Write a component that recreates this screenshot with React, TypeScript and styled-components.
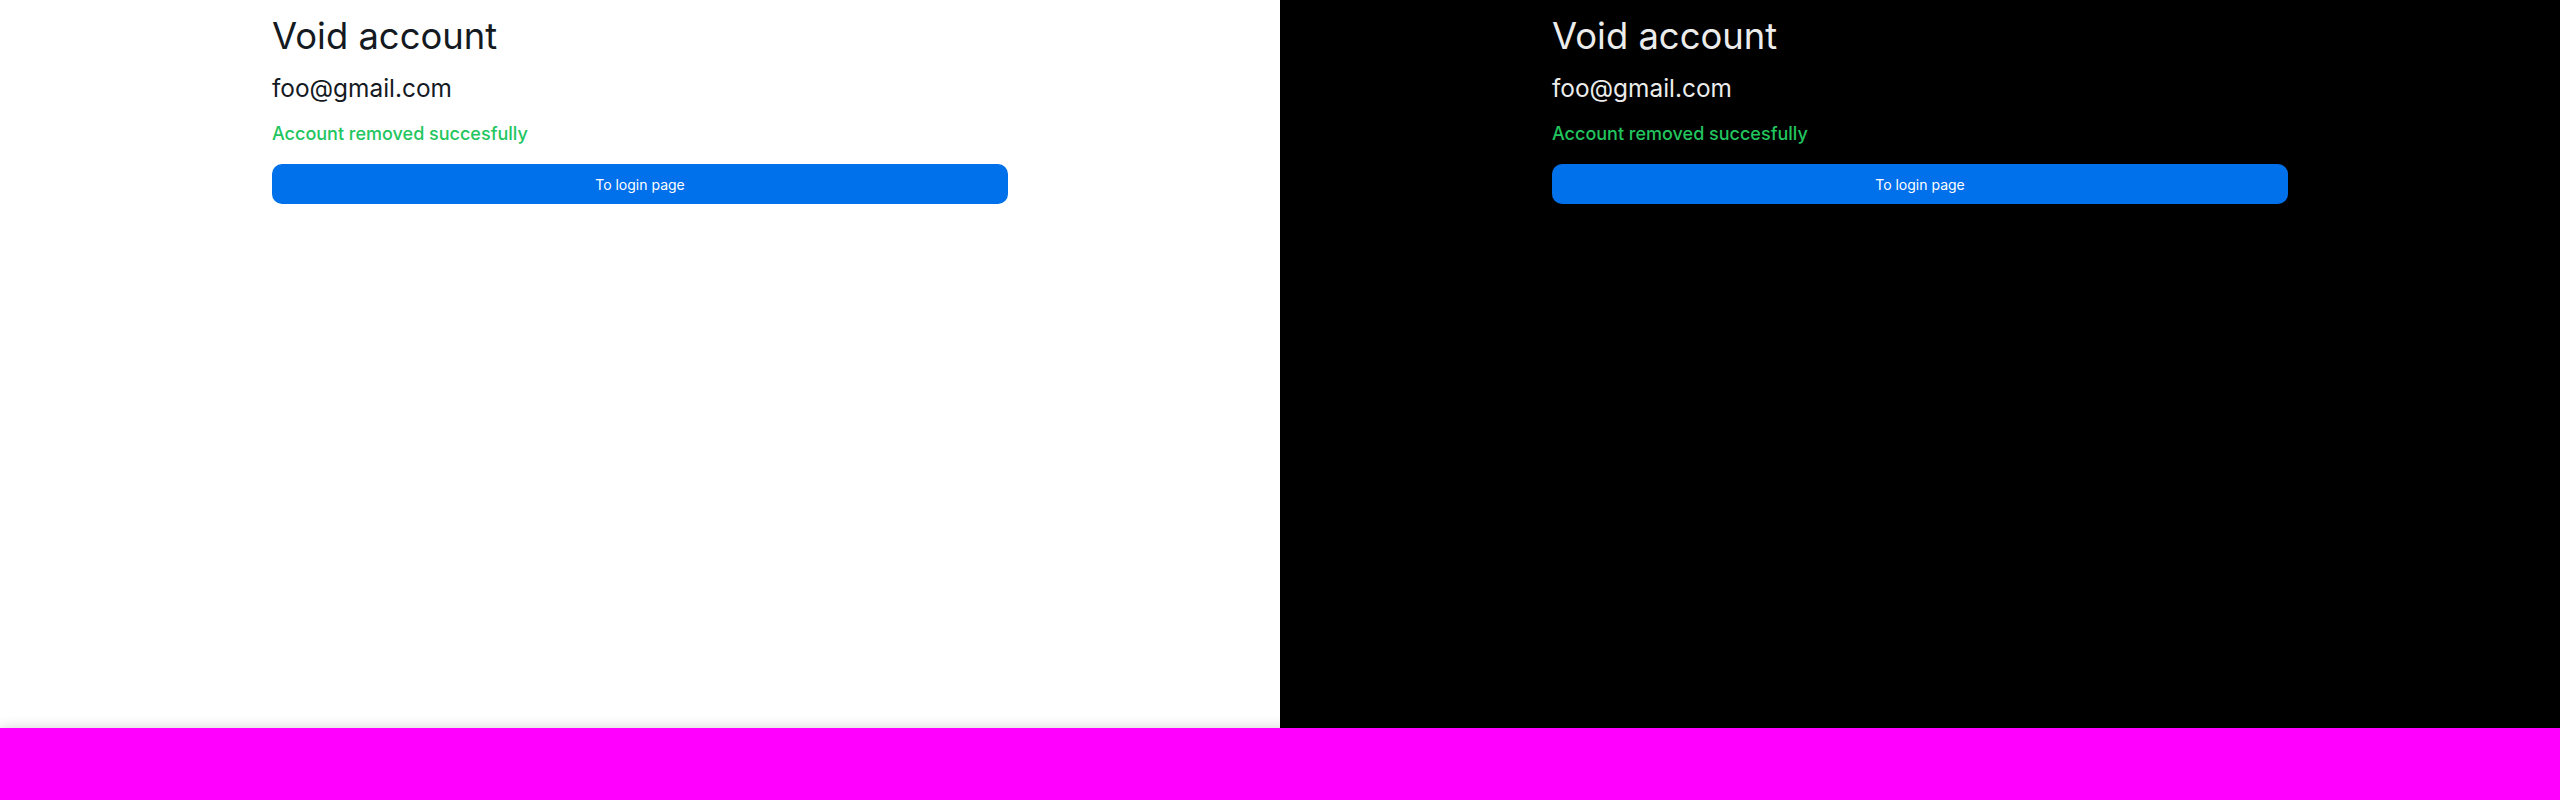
import React from "react";
import styled, { createGlobalStyle } from "styled-components";

const Global = createGlobalStyle`
  html, body { margin: 0; padding: 0; }
  body { background: #ff00ff; font-family: Inter, "Noto Sans", sans-serif; }
`;

const Page = styled.div`
  display: flex;
  flex-direction: column;
  width: 2560px;
  height: 800px;
`;

const Panels = styled.div`
  display: grid;
  grid-template-columns: 1fr 1fr;
  height: 728px;
`;

const Panel = styled.section<{ $dark?: boolean }>`
  display: flex;
  justify-content: center;
  background: ${(p) => (p.$dark ? "#000000" : "#ffffff")};
  color: ${(p) => (p.$dark ? "#ececec" : "#141a1f")};
`;

const Column = styled.div`
  width: 736px;
  display: flex;
  flex-direction: column;
  padding-top: 14px;
`;

const Title = styled.h1`
  margin: 0;
  font-size: 36.4px;
  font-weight: 400;
  line-height: 44px;
`;

const Email = styled.h2`
  margin: 16px 0 0;
  font-size: 24.4px;
  font-weight: 400;
  line-height: 29px;
`;

const Success = styled.p`
  margin: 19px 0 0;
  font-size: 18px;
  font-weight: 500;
  line-height: 24px;
  color: #22c55e;
`;

const Button = styled.button`
  margin-top: 18px;
  height: 40px;
  width: 100%;
  border: none;
  border-radius: 10px;
  background: #0070eb;
  color: #ffffff;
  font-family: Inter, "Noto Sans", sans-serif;
  font-size: 14px;
  cursor: pointer;
`;

const Footer = styled.div`
  flex: 1;
  background: #ff00ff;
  box-shadow: 0 0 12px rgba(0, 0, 0, 0.18);
  position: relative;
`;

function Card({ dark }: { dark?: boolean }) {
  return (
    <Panel $dark={dark}>
      <Column>
        <Title>Void account</Title>
        <Email>foo@gmail.com</Email>
        <Success>Account removed succesfully</Success>
        <Button>To login page</Button>
      </Column>
    </Panel>
  );
}

export default function App() {
  return (
    <>
      <Global />
      <Page>
        <Panels>
          <Card />
          <Card dark />
        </Panels>
        <Footer />
      </Page>
    </>
  );
}
